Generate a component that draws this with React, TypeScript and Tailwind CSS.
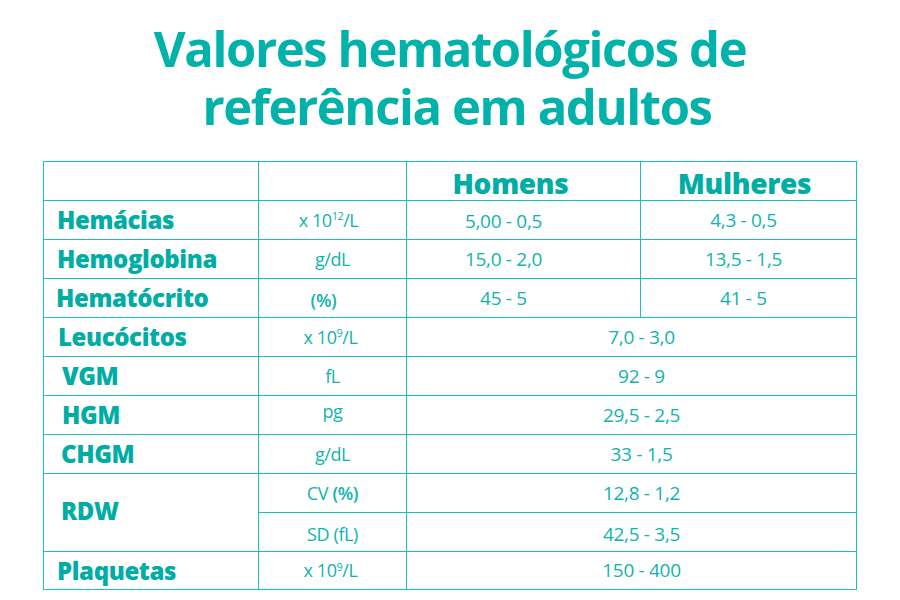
import React from "react";

const border = "border-[1.5px] border-[#1cc0c0]";

function Unit({ children, cls = "" }: { children: React.ReactNode; cls?: string }) {
  return (
    <td className={`${border} text-center text-[18px] text-[#12b3ad] tracking-[-0.4px] ${cls}`}>{children}</td>
  );
}

function Label({ children, cls = "pl-[13px]" }: { children: React.ReactNode; cls?: string }) {
  return (
    <td className={`${border} text-left text-[24px] font-extrabold text-[#00ada5] tracking-[-0.4px] ${cls}`}>{children}</td>
  );
}

function Sup({ children }: { children: React.ReactNode }) {
  return <sup className="text-[11px] top-[-0.55em] tracking-[-0.6px]">{children}</sup>;
}

export default function App() {
  const val = "text-center text-[19px] text-[#12b3ad] tracking-[-0.3px]";
  return (
    <div
      className="w-[900px] h-[600px] bg-white overflow-hidden"
      style={{ fontFamily: '"Open Sans", "Liberation Sans", sans-serif' }}
    >
      <h1 className="pt-[19px] text-center text-[49px] leading-[58px] font-bold text-[#00b2a9] tracking-[-1.4px]">
        <div>Valores hematológicos de</div>
        <div className="pl-[14px]">referência em adultos</div>
      </h1>
      <table className="mt-[26px] ml-[43px] w-[813px] border-collapse table-fixed">
        <colgroup>
          <col className="w-[215px]" />
          <col className="w-[148px]" />
          <col className="w-[234px]" />
          <col className="w-[216px]" />
        </colgroup>
        <tbody>
          <tr className="h-[39px]">
            <td className={border}></td>
            <td className={border}></td>
            <td className={`${border} text-center text-[28px] font-extrabold text-[#00ada5] tracking-[-0.3px] pr-[26px] pt-[4px] leading-[34px]`}>Homens</td>
            <td className={`${border} text-center text-[28px] font-extrabold text-[#00ada5] tracking-[-0.3px] pr-[8px] pt-[4px] leading-[34px]`}>Mulheres</td>
          </tr>
          <tr className="h-[39px]">
            <Label>Hemácias</Label>
            <Unit cls="pr-[8px]">
              x 10<Sup>12</Sup>/L
            </Unit>
            <td className={`${border} ${val} pr-[40px] pt-[3px]`}>5,00 - 0,5</td>
            <td className={`${border} ${val} pr-[10px]`}>4,3 - 0,5</td>
          </tr>
          <tr className="h-[39px]">
            <Label>Hemoglobina</Label>
            <Unit>g/dL</Unit>
            <td className={`${border} ${val} pr-[40px]`}>15,0 - 2,0</td>
            <td className={`${border} ${val} pr-[10px]`}>13,5 - 1,5</td>
          </tr>
          <tr className="h-[39px]">
            <Label cls="pl-[12px]">Hematócrito</Label>
            <Unit cls="pr-[18px] text-[17px] font-semibold pt-[4px]">(%)</Unit>
            <td className={`${border} ${val} pr-[40px]`}>45 - 5</td>
            <td className={`${border} ${val} pr-[10px]`}>41 - 5</td>
          </tr>
          <tr className="h-[39px]">
            <Label cls="pl-[14px]">Leucócitos</Label>
            <Unit cls="pr-[4px]">
              x 10<Sup>9</Sup>/L
            </Unit>
            <td colSpan={2} className={`${border} ${val} pl-[20px]`}>7,0 - 3,0</td>
          </tr>
          <tr className="h-[39px]">
            <Label cls="pl-[18px]">VGM</Label>
            <Unit>fL</Unit>
            <td colSpan={2} className={`${border} ${val} pl-[20px]`}>92 - 9</td>
          </tr>
          <tr className="h-[39px]">
            <Label cls="pl-[18px]">HGM</Label>
            <Unit cls="pb-[8px]">pg</Unit>
            <td colSpan={2} className={`${border} ${val} pl-[20px]`}>29,5 - 2,5</td>
          </tr>
          <tr className="h-[39px]">
            <Label cls="pl-[17px]">CHGM</Label>
            <Unit>g/dL</Unit>
            <td colSpan={2} className={`${border} ${val} pl-[20px]`}>33 - 1,5</td>
          </tr>
          <tr className="h-[39px]">
            <td rowSpan={2} className={`${border} text-left text-[24px] font-extrabold text-[#00ada5] tracking-[-0.4px] pl-[17px] pb-[4px]`}>RDW</td>
            <Unit>
              CV <span className="font-semibold">(%)</span>
            </Unit>
            <td colSpan={2} className={`${border} ${val} pl-[20px]`}>12,8 - 1,2</td>
          </tr>
          <tr className="h-[39px]">
            <Unit cls="pt-[4px]">SD (fL)</Unit>
            <td colSpan={2} className={`${border} ${val} pl-[20px] pt-[4px]`}>42,5 - 3,5</td>
          </tr>
          <tr className="h-[38px]">
            <Label>Plaquetas</Label>
            <Unit cls="pr-[4px]">
              x 10<Sup>9</Sup>/L
            </Unit>
            <td colSpan={2} className={`${border} ${val} pl-[20px]`}>150 - 400</td>
          </tr>
        </tbody>
      </table>
    </div>
  );
}
